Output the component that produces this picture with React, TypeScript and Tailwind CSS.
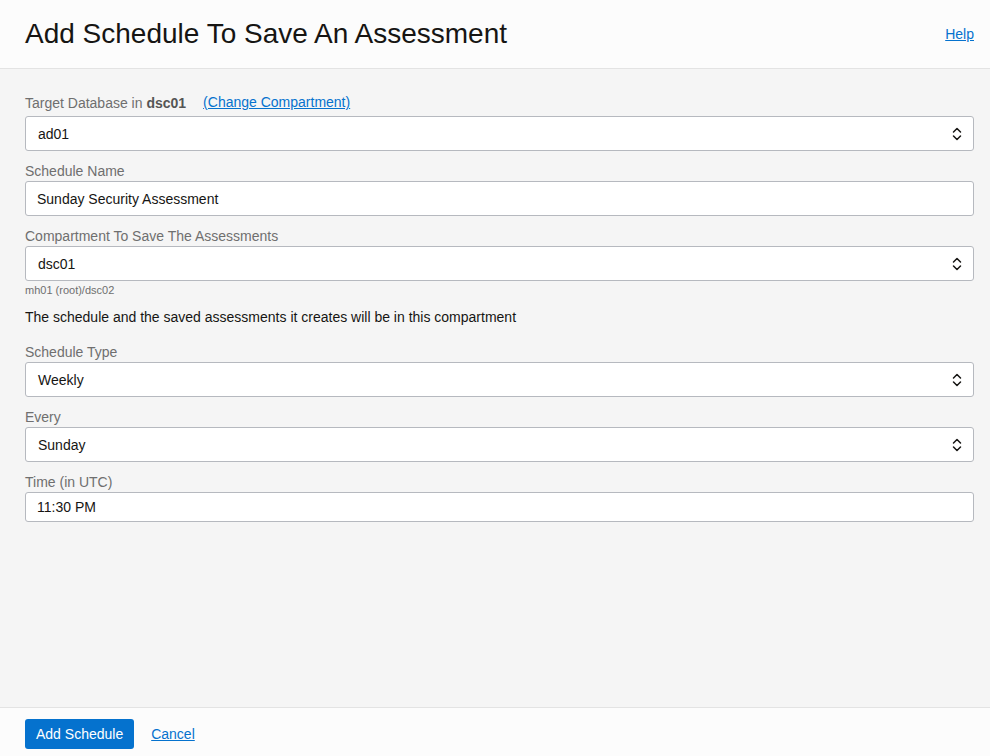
function Chevrons() {
  return (
    <svg width="10" height="16" viewBox="0 0 10 16" fill="none" stroke="#161513" strokeWidth="1.5" strokeLinecap="round" strokeLinejoin="round">
      <path d="M1.5 6 L5 2.5 L8.5 6" />
      <path d="M1.5 10 L5 13.5 L8.5 10" />
    </svg>
  );
}

function Label({ children }: { children: React.ReactNode }) {
  return <div className="h-5 leading-5 text-[14px] text-[#6f6f6f]">{children}</div>;
}

function SelectBox({ value }: { value: string }) {
  return (
    <div className="h-[35px] flex items-center justify-between pl-3 pr-[11px] bg-white border border-[#b6b9bf] rounded-[3px] text-[14px] text-[#161513]">
      <span className="mt-[1px]">{value}</span>
      <Chevrons />
    </div>
  );
}

function TextBox({ value, height }: { value: string; height: string }) {
  return (
    <div className={`${height} flex items-center pl-[11px] bg-white border border-[#b6b9bf] rounded-[3px] text-[14px] text-[#161513]`}>
      <span className="mt-[1px]">{value}</span>
    </div>
  );
}

export default function App() {
  return (
    <div className="h-[756px] flex flex-col bg-[#f5f5f5]" style={{ fontFamily: '"Liberation Sans", Arial, sans-serif' }}>
      {/* Header */}
      <header className="h-[69px] shrink-0 flex items-center justify-between pl-[25px] pr-4 bg-[#fcfcfc] border-b border-[#e3e3e3]">
        <h1 className="text-[28px] text-[#161513] leading-none">Add Schedule To Save An Assessment</h1>
        <a href="#" className="text-[14px] text-[#0572ce] underline">Help</a>
      </header>

      {/* Form */}
      <main className="flex-1 pl-[25px] pr-4 pt-[22px]">
        <div className="h-[25px] flex items-center text-[14px] text-[#6f6f6f]">
          <span>
            Target Database in <b className="font-bold text-[#555]">dsc01</b>
          </span>
          <a href="#" className="ml-[17px] -mt-[2px] text-[#0572ce] underline">(Change Compartment)</a>
        </div>
        <SelectBox value="ad01" />

        <div className="mt-[10px]">
          <Label>Schedule Name</Label>
          <TextBox value="Sunday Security Assessment" height="h-[35px]" />
        </div>

        <div className="mt-[10px]">
          <Label>Compartment To Save The Assessments</Label>
          <SelectBox value="dsc01" />
          <div className="h-[18px] leading-[18px] text-[11px] text-[#6f6f6f]">mh01 (root)/dsc02</div>
          <p className="mt-2 h-5 leading-5 text-[14px] text-[#161513]">
            The schedule and the saved assessments it creates will be in this compartment
          </p>
        </div>

        <div className="mt-[15px]">
          <Label>Schedule Type</Label>
          <SelectBox value="Weekly" />
        </div>

        <div className="mt-[10px]">
          <Label>Every</Label>
          <SelectBox value="Sunday" />
        </div>

        <div className="mt-[10px]">
          <Label>Time (in UTC)</Label>
          <TextBox value="11:30 PM" height="h-[30px]" />
        </div>
      </main>

      {/* Footer */}
      <footer className="h-[49px] shrink-0 flex items-start gap-[17px] pt-[11px] pl-[25px] pr-4 bg-[#fcfcfc] border-t border-[#e3e3e3]">
        <button className="h-[30px] px-[11px] rounded-[3px] bg-[#0572ce] text-white text-[14px]">Add Schedule</button>
        <a href="#" className="h-[30px] leading-[30px] text-[14px] text-[#0572ce] underline">Cancel</a>
      </footer>
    </div>
  );
}
